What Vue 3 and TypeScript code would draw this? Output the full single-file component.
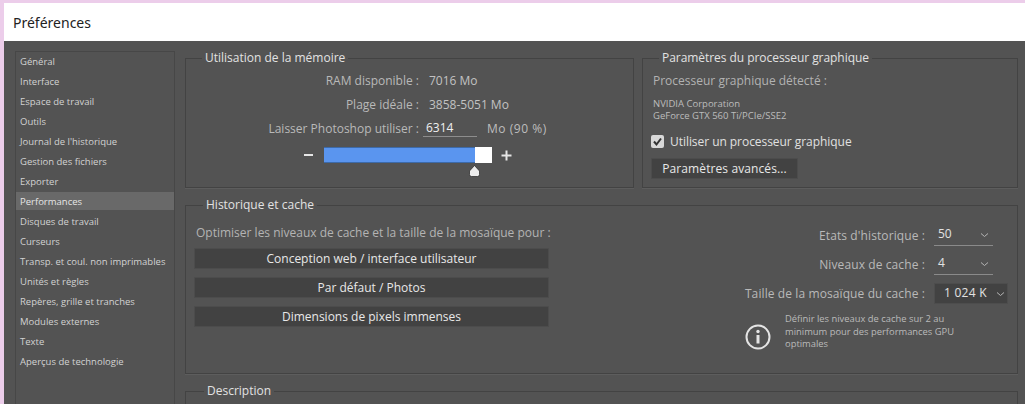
<script setup lang="ts">
const navItems: string[] = [
  'Général', 'Interface', 'Espace de travail', 'Outils', "Journal de l'historique",
  'Gestion des fichiers', 'Exporter', 'Performances', 'Disques de travail', 'Curseurs',
  'Transp. et coul. non imprimables', 'Unités et règles', 'Repères, grille et tranches',
  'Modules externes', 'Texte', 'Aperçus de technologie',
]
const presets: string[] = [
  'Conception web / interface utilisateur', 'Par défaut / Photos', 'Dimensions de pixels immenses',
]
const active = 'Performances'
</script>

<template>
  <div class="window">
    <header class="title">Préférences</header>
    <div class="body">
      <nav class="nav">
        <div v-for="n in navItems" :key="n" class="nav-item" :class="{ on: n === active }">{{ n }}</div>
      </nav>
      <main class="main">
        <div class="top">
          <fieldset class="box mem">
            <legend>Utilisation de la mémoire</legend>
            <div class="mem-row r1"><span class="lab">RAM disponible :</span><span class="val">7016 Mo</span></div>
            <div class="mem-row r2"><span class="lab">Plage idéale :</span><span class="val">3858-5051 Mo</span></div>
            <div class="mem-row r3">
              <span class="lab">Laisser Photoshop utiliser :</span>
              <span class="input">6314</span>
              <span class="unit">Mo (90 %)</span>
            </div>
            <div class="slider">
              <span class="minus"></span>
              <div class="track">
                <div class="fill"></div>
                <svg class="thumb" width="13" height="12" viewBox="0 0 13 12">
                  <path d="M6.5 .5 L11.5 6 V9.5 Q11.5 11.5 9.5 11.5 H3.5 Q1.5 11.5 1.5 9.5 V6 Z" fill="#ececec" stroke="#222" stroke-width=".7" />
                </svg>
              </div>
              <svg class="plus" width="11" height="11" viewBox="0 0 11 11">
                <path d="M5.5 .5v10M.5 5.5h10" stroke="#e6e6e6" stroke-width="2" />
              </svg>
            </div>
          </fieldset>
          <fieldset class="box gpu">
            <legend>Paramètres du processeur graphique</legend>
            <div class="detected">Processeur graphique détecté :</div>
            <div class="gpu-name">NVIDIA Corporation<br />GeForce GTX 560 Ti/PCIe/SSE2</div>
            <label class="check">
              <span class="tick">
                <svg width="13" height="13" viewBox="0 0 13 13"><path d="M3 6.5 L5.5 9.5 L10 3.5" fill="none" stroke="#333" stroke-width="2" /></svg>
              </span>
              Utiliser un processeur graphique
            </label>
            <button class="btn adv">Paramètres avancés...</button>
          </fieldset>
        </div>
        <fieldset class="box hist">
          <legend>Historique et cache</legend>
          <div class="hist-cols">
            <div class="hist-left">
              <div class="opt">Optimiser les niveaux de cache et la taille de la mosaïque pour :</div>
              <button v-for="p in presets" :key="p" class="btn preset">{{ p }}</button>
            </div>
            <div class="hist-right">
              <div class="sel-row">
                <span class="lab">Etats d'historique :</span>
                <span class="sel">50<svg class="chev" width="9" height="6" viewBox="0 0 9 6"><path d="M1 1.5 L4.5 4.5 L8 1.5" fill="none" stroke="#b5b5b5" /></svg></span>
              </div>
              <div class="sel-row">
                <span class="lab">Niveaux de cache :</span>
                <span class="sel">4<svg class="chev" width="9" height="6" viewBox="0 0 9 6"><path d="M1 1.5 L4.5 4.5 L8 1.5" fill="none" stroke="#b5b5b5" /></svg></span>
              </div>
              <div class="sel-row big">
                <span class="lab">Taille de la mosaïque du cache :</span>
                <span class="sel boxed">1 024 K<svg class="chev" width="9" height="6" viewBox="0 0 9 6"><path d="M1 1.5 L4.5 4.5 L8 1.5" fill="none" stroke="#b5b5b5" /></svg></span>
              </div>
              <div class="info">
                <svg width="26" height="26" viewBox="0 0 26 26">
                  <circle cx="13" cy="13" r="11.5" fill="none" stroke="#e4e4e4" stroke-width="2" />
                  <circle cx="13" cy="7.5" r="1.7" fill="#e4e4e4" />
                  <path d="M13 11v8.5" stroke="#e4e4e4" stroke-width="3" />
                </svg>
                <p>Définir les niveaux de cache sur 2 au minimum pour des performances GPU optimales</p>
              </div>
            </div>
          </div>
        </fieldset>
        <fieldset class="box desc">
          <legend>Description</legend>
        </fieldset>
      </main>
    </div>
  </div>
</template>

<style>
html, body { margin: 0; height: 404px; overflow: hidden; background: #eccdea; }
</style>

<style scoped>
* { box-sizing: border-box; }
.window {
  margin: 3px 0 0 4px;
  height: 401px;
  display: flex;
  flex-direction: column;
  overflow: hidden;
  font-family: "Open Sans", "Noto Sans", sans-serif;
  color: #c6c6c6;
  font-size: 12px;
}
.title {
  height: 38px;
  flex: none;
  background: #fff;
  color: #222;
  font-family: "Noto Sans", "Open Sans", sans-serif;
  font-size: 14px;
  line-height: 40px;
  padding-left: 9px;
}
.body {
  flex: 1;
  background: #535353;
  display: flex;
  align-items: flex-start;
  padding: 9px 7px 0 11px;
  gap: 10px;
  overflow: hidden;
}
.nav {
  width: 160px;
  height: 360px;
  flex: none;
  margin-top: 1px;
  border: 1px solid #474747;
  border-bottom: 0;
  font-size: 9.5px;
  color: #d2d2d2;
}
.nav-item {
  height: 18px;
  margin-bottom: 2px;
  line-height: 20px;
  padding-left: 4px;
  white-space: nowrap;
}
.nav-item.on { background: #696969; color: #e6e6e6; }
.main { flex: 1; min-width: 0; }
.top { display: flex; gap: 8px; }
.box {
  margin: 0;
  padding: 0;
  min-width: 0;
  border: 1px solid #434343;
  box-shadow: 0 1px 0 #5d5d5d;
}
.box legend {
  height: 16px;
  line-height: 16px;
  padding: 0 3px;
  color: #e2e2e2;
  white-space: nowrap;
}
.mem { width: 449px; height: 138px; position: relative; }
.mem legend { margin-left: 16px; }
.gpu { flex: 1; height: 138px; padding-left: 10px; }
.gpu legend { margin-left: 6px; letter-spacing: -.05px; }
.mem-row { display: flex; height: 24px; align-items: center; }
.mem-row .lab { width: 233px; text-align: right; color: #b9b9b9; white-space: nowrap; }
.r1 { margin-top: 2px; }
.r1 .val, .r2 .val { margin-left: 10px; color: #c2c2c2; }
.input {
  margin-left: 4px;
  width: 54px;
  height: 17px;
  line-height: 15px;
  padding-left: 3px;
  border-bottom: 1px solid #8d8d8d;
  color: #f0f0f0;
}
.unit { margin-left: 10px; color: #bdbdbd; letter-spacing: .55px; }
.slider { display: flex; align-items: center; margin-top: 7px; padding-left: 118px; height: 16px; }
.minus { width: 9px; height: 2px; background: #e6e6e6; margin-right: 11px; }
.track {
  position: relative;
  width: 168px;
  height: 16px;
  background: #fff;
  margin-right: 9px;
}
.fill { width: 151px; height: 16px; background: #5a95ef; border: 1px solid #3d6aa8; border-right: 0; border-left: 0; }
.thumb { position: absolute; left: 144px; top: 18px; }
.detected { margin-top: 6px; color: #b2b2b2; line-height: 18px; }
.gpu-name { margin-top: 8px; font-size: 9.5px; line-height: 12px; color: #bcbcbc; }
.check { display: flex; align-items: center; gap: 6px; margin: 12px 0 0 -2px; height: 14px; color: #e0e0e0; letter-spacing: -.05px; }
.tick { width: 13px; height: 13px; background: #d8d8d8; border-radius: 2px; display: block; }
.tick svg { display: block; }
.btn {
  display: block;
  font: inherit;
  color: #e8e8e8;
  background: #424242;
  border: 1px solid #4c4c4c;
  border-radius: 1px;
  padding: 0;
}
.adv { width: 147px; height: 21px; margin: 10px 0 0 -2px; letter-spacing: .1px; }
.hist { height: 177px; margin-top: 9px; }
.hist legend { margin-left: 17px; }
.hist-cols { display: flex; justify-content: space-between; }
.hist-left { width: 363px; padding-left: 8px; }
.opt { margin: 11px 0 0 2px; height: 17px; line-height: 17px; color: #b4b4b4; white-space: nowrap; }
.preset { width: 355px; height: 21px; margin-top: 8px; }
.preset:first-of-type { margin-top: 7px; }
.hist-right { width: 270px; margin-right: 9px; padding-top: 12px; }
.sel-row { display: flex; justify-content: flex-end; align-items: center; height: 20px; margin-bottom: 9px; }
.sel-row .lab { color: #b9b9b9; margin-right: 9px; white-space: nowrap; letter-spacing: .1px; }
.sel {
  width: 74px;
  height: 20px;
  line-height: 18px;
  position: relative;
  padding-left: 4px;
  color: #e2e2e2;
}
.sel::after {
  content: "";
  position: absolute;
  left: 0; width: 59px; bottom: -1px;
  border-bottom: 1px solid #8a8a8a;
}
.sel .chev { position: absolute; left: 46px; top: 7px; }
.big { margin-bottom: 5px; }
.boxed { background: #424242; border: 1px solid #4d4d4d; padding-left: 9px; height: 21px; letter-spacing: .25px; }
.boxed::after { display: none; }
.boxed .chev { left: 61px; }
.info { display: flex; gap: 14px; align-items: flex-start; padding-left: 7px; }
.info svg { flex: none; margin-top: 16px; }
.info p { margin: 5px 0 0; font-size: 9.4px; line-height: 12.5px; color: #bababa; width: 190px; }
.desc { height: 60px; margin-top: 9px; }
.desc legend { margin-left: 18px; }
</style>
